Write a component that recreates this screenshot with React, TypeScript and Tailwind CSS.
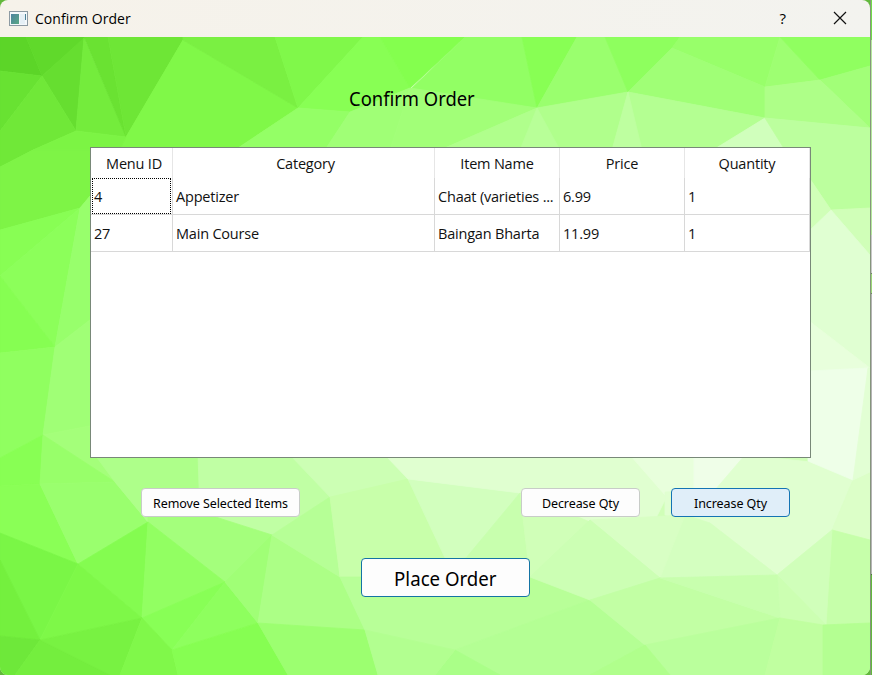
import React from "react";

// Facets of the low-poly backdrop: [fill, points]
const facets: [string, string][] = [
  ["#5cd528", "0,37 26,37 42,76 0,71"],
  ["#60d92b", "26,37 86,37 42,76"],
  ["#66de30", "42,76 84,38 76,131"],
  ["#68e232", "0,71 42,76 0,131"],
  ["#70e838", "0,131 42,76 76,131 33,150 0,167"],
  ["#74ec3c", "84,38 76,131 126,137"],
  ["#6ae232", "84,37 108,37 126,137"],
  ["#6ee636", "108,37 183,37 183,40 126,137"],
  ["#80f848", "183,40 298,108 235,150 120,150 126,137"],
  ["#7af042", "183,37 275,37 298,108 183,40"],
  ["#80f84a", "275,37 363,37 298,108"],
  ["#7cf444", "76,131 126,137 120,150 33,150"],
  ["#7ef446", "33,150 95,150 95,190 80,208 0,230 0,167"],
  ["#88fe54", "0,230 80,208 0,276"],
  ["#8cff5a", "0,276 80,208 55,347"],
  ["#86fe52", "0,276 55,347 0,353"],
  ["#98ff6c", "80,208 95,190 95,316 55,347"],
  ["#90ff60", "0,353 55,347 43,435 0,458"],
  ["#a0ff76", "55,347 95,316 95,425 43,435"],
  ["#a4ff7a", "43,435 95,425 110,460 115,482"],
  ["#88ff54", "43,435 40,484 0,486 0,458"],
  ["#8aff56", "0,486 40,484 78,564 0,533"],
  ["#98ff6a", "43,435 115,482 40,484"],
  ["#9aff6e", "40,484 115,482 148,522 78,564"],
  ["#aeff8a", "95,455 198,455 202,520 148,522 115,482"],
  ["#c0ffa4", "198,455 305,455 330,497 272,535 200,515"],
  ["#a4ff7c", "148,510 200,512 272,535 225,582 148,522"],
  ["#84fc50", "148,522 78,564 142,618"],
  ["#92ff62", "148,522 225,582 142,618"],
  ["#88ff56", "142,618 225,582 172,650"],
  ["#8eff5e", "225,582 258,623 172,650"],
  ["#7af646", "0,533 78,564 40,640 0,560"],
  ["#7ef848", "78,564 142,618 40,640"],
  ["#74f03e", "0,560 40,640 0,636"],
  ["#6ee83a", "0,636 40,640 15,675 0,675"],
  ["#78f242", "40,640 142,618 120,675 110,675"],
  ["#74ee3e", "15,675 40,640 110,675"],
  ["#80f84a", "142,618 172,650 178,675 120,675"],
  ["#86fe52", "172,650 258,623 288,675 178,675"],
  ["#a0ff76", "258,623 225,582 272,535"],
  ["#acff86", "272,535 340,577 365,630 258,623"],
  ["#9cff70", "258,623 365,630 378,675 288,675"],
  ["#b6ff96", "272,535 330,497 340,577"],
  ["#ccffb4", "290,455 385,455 408,479 330,497"],
  ["#c8ffaa", "330,497 408,479 446,560 440,577 340,577"],
  ["#d2ffbe", "408,479 520,493 466,560 446,560"],
  ["#e0ffd0", "385,455 635,455 670,490 655,520 590,525 520,493 408,479"],
  ["#c8ffae", "520,493 530,577 440,577 446,560 466,558"],
  ["#d0ffb8", "520,493 590,522 530,577"],
  ["#b8ff98", "340,577 530,577 590,600 455,650 365,630"],
  ["#b4ff94", "455,650 590,600 645,645 590,675 500,675"],
  ["#aaff88", "455,650 500,675 435,675"],
  ["#b2ff90", "365,630 455,650 435,675 378,675"],
  ["#e8ffdc", "630,455 665,495 694,490 694,455"],
  ["#effee8", "694,455 748,455 715,492 694,490"],
  ["#e0ffd0", "745,455 811,462 853,480 832,530 777,575 710,523 665,515 665,492 715,490"],
  ["#dcffc8", "853,480 870,470 870,540 832,530"],
  ["#c6ffaa", "832,530 870,540 870,623 826,625"],
  ["#d0ffba", "777,575 832,530 826,625"],
  ["#ccffb2", "777,575 826,625 780,618"],
  ["#d4ffc0", "685,515 710,523 777,575 660,578"],
  ["#d8ffc4", "590,520 685,515 660,578"],
  ["#ccffb4", "530,577 590,520 660,578 590,600"],
  ["#c2ffa4", "660,578 780,618 645,645 590,600"],
  ["#c8ffae", "660,578 777,575 780,618"],
  ["#baff9c", "645,645 780,618 765,675 670,675"],
  ["#b0ff8c", "645,645 670,675 590,675"],
  ["#c0ffa0", "780,618 823,625 823,675 765,675"],
  ["#b4ff92", "823,625 870,623 870,675 823,675"],
  ["#88ff54", "363,37 380,37 410,88 350,112 298,108"],
  ["#84ff4e", "380,37 465,37 410,88"],
  ["#92ff64", "465,37 522,37 537,108 410,90"],
  ["#88ff54", "522,37 577,37 537,108"],
  ["#9aff6e", "577,37 605,37 628,92 537,108"],
  ["#94ff66", "298,108 350,112 325,150 235,150"],
  ["#a0ff76", "350,112 410,88 390,150 325,150"],
  ["#a2ff78", "410,88 537,108 440,150 390,150"],
  ["#b0ff8c", "537,108 628,92 612,150 440,150"],
  ["#b8ff98", "537,108 520,150 560,150"],
  ["#8eff5e", "605,37 680,37 672,48 628,92"],
  ["#98ff6a", "680,37 780,37 765,87 672,48"],
  ["#a0ff76", "672,48 765,87 765,118 628,92"],
  ["#9eff72", "780,37 765,87 820,80"],
  ["#90ff60", "780,37 870,37 870,66 820,80"],
  ["#a2ff78", "820,80 870,66 870,128"],
  ["#aeff88", "765,87 820,80 870,128 765,118"],
  ["#b4ff92", "628,92 765,118 715,150 640,150"],
  ["#beffa0", "628,92 642,150 612,150"],
  ["#d0ffbc", "765,118 785,150 713,150"],
  ["#bcff9e", "765,118 870,128 870,208 831,210 808,176 785,150"],
  ["#d0ffb8", "808,176 831,210 808,232"],
  ["#d0ffb8", "831,210 870,208 870,255"],
  ["#e0ffd2", "808,232 831,210 870,255 870,368 808,320"],
  ["#e8ffdc", "808,320 870,368 808,371"],
  ["#eeffe8", "808,371 868,368 860,450 853,480 808,461"],
  ["#e2ffd4", "868,368 870,368 870,472 853,480"],
];

function Backdrop() {
  return (
    <svg className="absolute inset-0" width="870" height="638" viewBox="0 37 870 638" aria-hidden="true">
      <rect y="37" width="870" height="638" fill="#d0ffb8" />
      {facets.map(([fill, points], i) => (
        <polygon key={i} points={points} fill={fill} stroke={fill} strokeWidth="0.8" strokeLinejoin="round" />
      ))}
    </svg>
  );
}

function AppIcon() {
  return (
    <svg width="20" height="16" viewBox="0 0 20 16" aria-hidden="true">
      <defs>
        <linearGradient id="pane" x1="0" y1="0" x2="1" y2="1">
          <stop offset="0" stopColor="#4c83a0" />
          <stop offset="1" stopColor="#5aa884" />
        </linearGradient>
      </defs>
      <rect x="0.5" y="0.5" width="18" height="14" fill="#f4f8fb" stroke="#8d9aa3" />
      <rect x="2" y="3" width="8" height="10" fill="url(#pane)" />
      <rect x="11" y="3" width="5" height="10" fill="#e6f0f6" />
      <rect x="16" y="3" width="1" height="6" fill="#4c8296" />
    </svg>
  );
}

const cols = "grid grid-cols-[82px_262px_125px_125px_125px]";
const rows = [
  ["4", "Appetizer", "Chaat (varieties ...", "6.99", "1"],
  ["27", "Main Course", "Baingan Bharta", "11.99", "1"],
];

function OrderTable() {
  return (
    <div className="ml-[90px] mt-[34px] h-[311px] w-[721px] border border-[#788878] bg-white font-['Open_Sans',sans-serif] text-[14.5px] tracking-[-0.2px] text-[#111]">
      <div className={`${cols} h-[30px]`}>
        {["Menu ID", "Category", "Item Name", "Price", "Quantity"].map((h, i) => (
          <div key={h} className={`flex items-center justify-center border-r border-[#e6e6e6] pt-px ${i === 0 ? "pl-[5px]" : ""} ${i === 1 ? "pl-[4px]" : ""}`}>
            {h}
          </div>
        ))}
      </div>
      {rows.map((row, r) => (
        <div key={row[0]} className={`${cols} h-[37px]`}>
          {row.map((cell, c) => (
            <div key={c} className="relative flex items-center whitespace-nowrap border-b border-r border-[#d8d8d8] pl-[3px] pt-[2px]">
              {r === 0 && c === 0 && <span className="absolute inset-x-px bottom-0 top-0 border border-dotted border-black" />}
              {cell}
            </div>
          ))}
        </div>
      ))}
    </div>
  );
}

export default function App() {
  return (
    <div className="flex h-[675px] w-[872px] overflow-hidden bg-[#62b83c] font-['Noto_Sans',sans-serif] text-black">
      <div className="flex w-[870px] flex-col overflow-hidden rounded-[8px]">
        <header className="flex h-[37px] items-center bg-gradient-to-r from-[#f6f2ea] to-[#f3f3ef] pl-[9px] font-['Open_Sans',sans-serif]">
          <AppIcon />
          <span className="ml-[6px] text-[14px] tracking-[0.05px]">Confirm Order</span>
          <span className="ml-auto mr-[47px] text-[15px]">?</span>
          <svg className="-mt-px mr-[23px]" width="14" height="14" viewBox="0 0 14 14" stroke="#111" strokeWidth="1.2" aria-hidden="true">
            <path d="M1 1L13 13M13 1L1 13" />
          </svg>
        </header>
        <main className="relative h-[638px]">
          <Backdrop />
          <div className="relative flex flex-col">
            <h1 className="ml-[349px] mt-[48px] h-[28px] origin-left scale-x-[0.92] whitespace-nowrap text-[20px] leading-[28px]">Confirm Order</h1>
            <OrderTable />
            <div className="mt-[30px] flex pl-[141px] text-[12.5px] tracking-[-0.08px]">
              <button className="h-[29px] w-[159px] rounded-[4px] border border-[#c8ccc8] bg-[#fdfdfd] pt-[3px]">Remove Selected Items</button>
              <button className="ml-[221px] h-[29px] w-[119px] rounded-[4px] border border-[#c8ccc8] bg-[#fdfdfd] pt-[3px]">Decrease Qty</button>
              <button className="ml-[31px] h-[29px] w-[119px] rounded-[4px] border border-[#1474b4] bg-[#e0eef9] pt-[3px]">Increase Qty</button>
            </div>
            <button className="ml-[361px] mt-[41px] h-[39px] w-[169px] rounded-[4px] border border-[#1474a4] bg-[#fdfdfd] pt-px text-[20.5px]">
              <span className="inline-block scale-x-[0.91]">Place Order</span>
            </button>
          </div>
        </main>
      </div>
      <div className="flex w-[2px] flex-col border-l border-[#85957c]">
        <div className="h-[40px] bg-[#70dc48]" />
        <div className="h-[195px] bg-[#b4e89c]" />
        <div className="h-[38px] bg-[#c8c8c8]" />
        <div className="h-[21px] border-y border-[#708068] bg-[#9cd878]" />
        <div className="h-[280px] bg-[#b4b4b4]" />
        <div className="grow border-t border-[#507040] bg-[#62b83c]" />
      </div>
    </div>
  );
}
